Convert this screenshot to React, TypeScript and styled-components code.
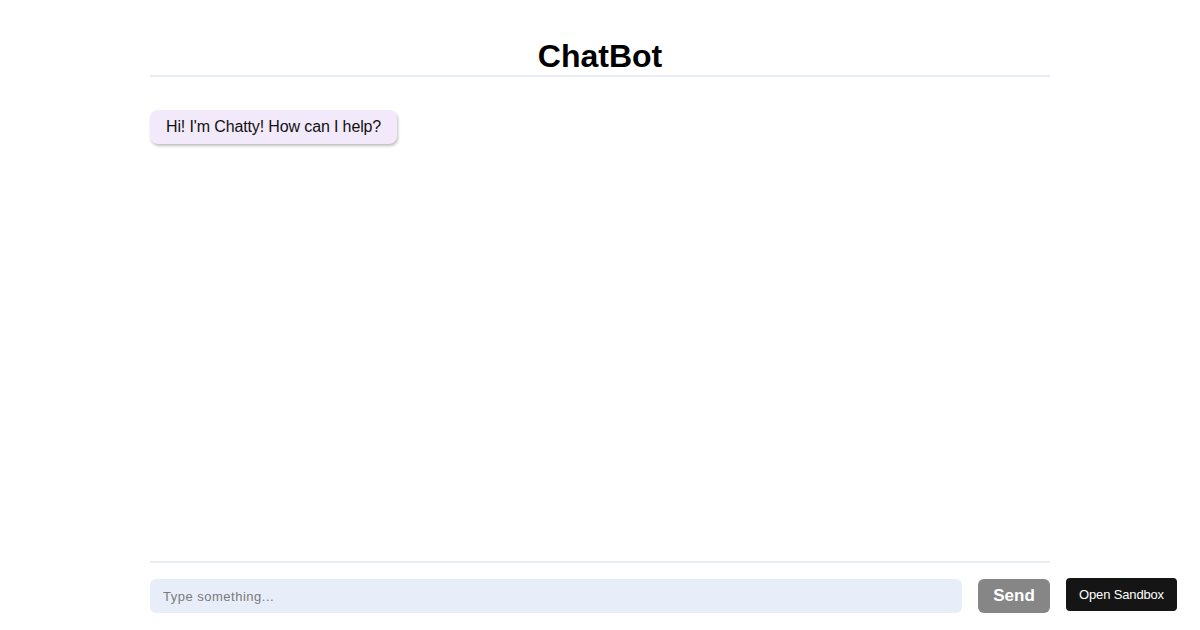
import React from "react";
import styled, { createGlobalStyle } from "styled-components";

const Global = createGlobalStyle`
  html, body { margin: 0; padding: 0; background: #fff; }
  body { font-family: "Liberation Sans", Arial, sans-serif; }
  * { box-sizing: border-box; }
`;

const Page = styled.div`
  width: 900px;
  height: 630px;
  margin: 0 auto;
  display: flex;
  flex-direction: column;
`;

const Header = styled.header`
  padding-top: 38px;
  border-bottom: 2px solid #e8edf7;
`;

const Title = styled.h1`
  margin: 0;
  font-size: 32px;
  line-height: 37px;
  font-weight: 700;
  text-align: center;
  color: #000;
`;

const Messages = styled.div`
  flex: 1;
  padding-top: 33px;
  display: flex;
  flex-direction: column;
  align-items: flex-start;
  gap: 12px;
`;

const Bubble = styled.div`
  background: #f2eafa;
  color: #111;
  font-size: 16px;
  line-height: 18px;
  letter-spacing: -0.13px;
  padding: 8px 16px;
  border-radius: 8px;
  box-shadow: 1px 2px 3px rgba(0, 0, 0, 0.25);
`;

const Footer = styled.form`
  border-top: 2px solid #e8edf7;
  padding: 16px 0 17px;
  display: flex;
  gap: 16px;
`;

const Input = styled.input`
  flex: 1;
  height: 34px;
  border: none;
  outline: none;
  background: #e8eef9;
  border-radius: 6px;
  padding: 0 13px;
  font-family: "Liberation Sans", Arial, sans-serif;
  font-size: 13px;
  letter-spacing: 0.5px;
  color: #222;
  &::placeholder { color: #7a7a7a; }
`;

const SendButton = styled.button`
  width: 72px;
  height: 34px;
  border: none;
  border-radius: 6px;
  background: #868686;
  color: #fff;
  font-family: "Liberation Sans", Arial, sans-serif;
  font-weight: 700;
  font-size: 17px;
`;

const SandboxButton = styled.button`
  position: fixed;
  right: 23px;
  bottom: 19px;
  width: 111px;
  height: 33px;
  border: none;
  border-radius: 4px;
  background: #151515;
  color: #fff;
  font-family: "Liberation Sans", Arial, sans-serif;
  font-size: 13px;
  letter-spacing: -0.15px;
`;

export default function App() {
  return (
    <>
      <Global />
      <Page>
        <Header>
          <Title>ChatBot</Title>
        </Header>
        <Messages>
          <Bubble>Hi! I'm Chatty! How can I help?</Bubble>
        </Messages>
        <Footer onSubmit={(e) => e.preventDefault()}>
          <Input placeholder="Type something..." />
          <SendButton type="submit">Send</SendButton>
        </Footer>
      </Page>
      <SandboxButton>Open Sandbox</SandboxButton>
    </>
  );
}
